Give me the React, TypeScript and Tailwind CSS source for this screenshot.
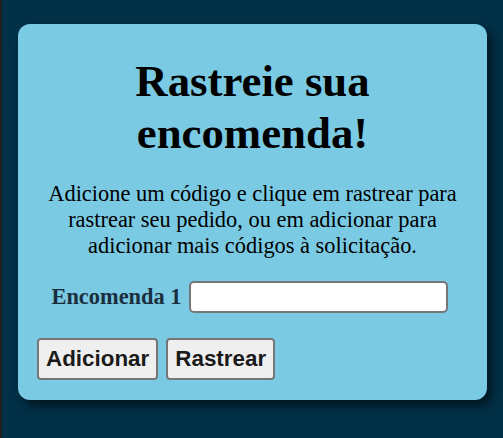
import { useState } from 'react';

const App = () => {
  const [codes, setCodes] = useState<string[]>(['']);

  const updateCode = (index: number, value: string) => {
    setCodes(codes.map((c, i) => (i === index ? value : c)));
  };

  return (
    <div className="min-h-[438px] w-full flex bg-[#023047]">
      {/* thin left strip */}
      <div className="w-[2px] bg-[#1e1e1e]"></div>

      <div className="flex-1 pl-[16px] pt-[24px]">
        <div className="w-[469px] rounded-[12px] bg-[#7bcae4] px-[19px] pt-[32px] pb-[20px] shadow-[5px_6px_10px_rgba(0,0,0,0.55)] font-['Liberation_Serif',serif] text-[22.4px] leading-[1.15] text-black">
          <h1 className="text-center text-[44.8px] font-bold leading-[1.15] text-black">
            Rastreie sua encomenda!
          </h1>

          <p className="mt-[22px] text-center px-[8px]">
            Adicione um código e clique em rastrear para rastrear seu pedido, ou em adicionar para
            adicionar mais códigos à solicitação.
          </p>

          <div className="mt-[23px] flex flex-col gap-2">
            {codes.map((code, i) => (
              <div key={i} className="flex items-center justify-center gap-[7px] pr-[6px]">
                <label className="font-bold text-[#1a2f3e]">Encomenda {i + 1}</label>
                <input
                  value={code}
                  onChange={e => updateCode(i, e.target.value)}
                  className="h-[32px] w-[259px] rounded-[5px] border-2 border-[#767676] bg-white px-2 text-[16px] outline-none"
                />
              </div>
            ))}
          </div>

          <div className="mt-[25px] flex gap-[8px]">
            <button
              onClick={() => setCodes([...codes, ''])}
              className="rounded-[4px] border-2 border-[#767676] bg-[#efefef] px-[7px] py-[6px] font-['Liberation_Sans',Arial,sans-serif] text-[22.4px] font-bold leading-[1.15] text-[#1a1a1a]"
            >
              Adicionar
            </button>
            <button className="rounded-[4px] border-2 border-[#767676] bg-[#efefef] px-[7px] py-[6px] font-['Liberation_Sans',Arial,sans-serif] text-[22.4px] font-bold leading-[1.15] text-[#1a1a1a]">
              Rastrear
            </button>
          </div>
        </div>
      </div>
    </div>
  );
};

export default App;
